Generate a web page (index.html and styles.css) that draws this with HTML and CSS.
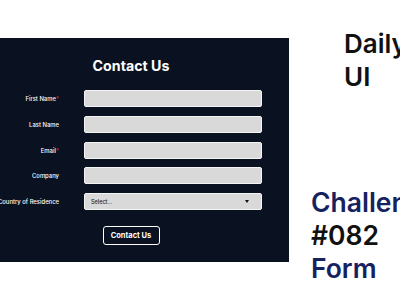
FILE: index.html
```html
<!DOCTYPE html>
<html>
<head>
<meta charset="utf-8">
<link rel="stylesheet" href="styles.css">
</head>
<body>
<div class="page">
  <section class="panel">
    <div class="form">
      <h1 class="title">Contact Us</h1>
      <div class="grid">
        <div class="label"><span>First Name<span class="req">*</span></span></div>
        <div class="input"></div>
        <div class="label"><span>Last Name</span></div>
        <div class="input"></div>
        <div class="label"><span>Email<span class="req">*</span></span></div>
        <div class="input"></div>
        <div class="label"><span>Company</span></div>
        <div class="input"></div>
        <div class="label"><span>Country of Residence</span></div>
        <div class="input select"><span class="placeholder">Select...</span><span class="caret"></span></div>
      </div>
      <div class="actions"><button class="btn">Contact Us</button></div>
    </div>
  </section>
  <aside class="side">
    <div class="daily">Daily<br>UI</div>
    <div class="challenge"><span class="navy">Challenge</span><br>#082<br><span class="navy">Form</span></div>
  </aside>
</div>
</body>
</html>
```
FILE: styles.css
```css
* { box-sizing: border-box; }
html, body { margin: 0; padding: 0; background: #ffffff; }
body { font-family: Inter, "Noto Sans", sans-serif; width: 400px; height: 300px; overflow: hidden; }
.page { display: flex; align-items: flex-start; width: 400px; height: 300px; }
.panel {
  flex: 0 0 289px;
  height: 224px;
  margin-top: 38px;
  background: #0a1120;
  padding-right: 27px;
}
.form { width: 262px; display: flex; flex-direction: column; align-items: center; }
.title {
  margin: 18px 0 0;
  color: #ffffff;
  font-size: 14.2px;
  font-weight: 700;
  line-height: 20px;
  height: 20px;
}
.grid {
  margin-top: 14px;
  display: grid;
  grid-template-columns: 59px 178px;
  grid-auto-rows: 17px;
  column-gap: 25px;
  row-gap: 8.75px;
  width: 262px;
}
.label {
  display: flex;
  justify-content: flex-end;
  align-items: center;
  color: #ffffff;
  font-size: 5.9px;
  font-weight: 500;
  white-space: nowrap;
}
.label .req { color: #e0302a; }
.input {
  background: #d9d9d9;
  border: 1px solid #f4f4f4;
  border-radius: 2px;
}
.select { display: flex; align-items: center; justify-content: space-between; padding: 0 12px 0 6px; }
.placeholder { font-size: 5.5px; color: #222; font-weight: 500; }
.caret {
  width: 0; height: 0;
  border-left: 2.5px solid transparent;
  border-right: 2.5px solid transparent;
  border-top: 3px solid #111;
}
.actions { margin-top: 12px; }
.btn {
  width: 57px;
  height: 19px;
  background: transparent;
  border: 1px solid #ffffff;
  border-radius: 3px;
  color: #ffffff;
  font-family: Inter, sans-serif;
  font-size: 7.5px;
  font-weight: 700;
  padding: 0;
}
.side { flex: 1; padding-left: 22px; white-space: nowrap; }
.daily {
  margin: 27px 0 0 33px;
  font-size: 26px;
  font-weight: 600;
  line-height: 33px;
  color: #111111;
}
.challenge {
  margin-top: 93px;
  font-size: 26.5px;
  font-weight: 600;
  line-height: 33px;
  color: #111111;
}
.navy { color: #16225f; }
```
